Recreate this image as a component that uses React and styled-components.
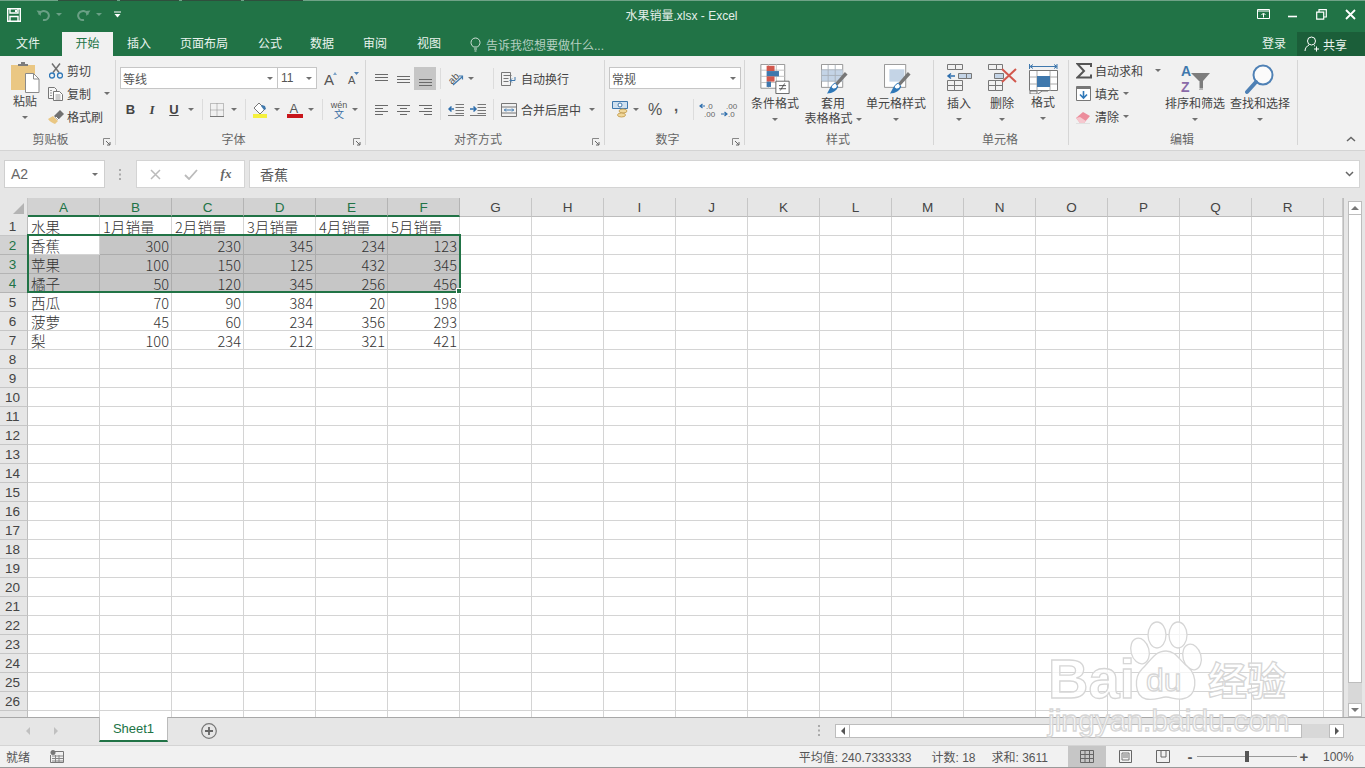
import styled, { createGlobalStyle } from 'styled-components';

const GlobalStyle = createGlobalStyle`
  html, body {
    margin: 0;
    padding: 0;
    background: #f1f1f1;
  }
  * {
    box-sizing: border-box;
  }
  svg {
    flex: none;
  }
`;

const FONT = `"Liberation Sans", "Noto Sans CJK SC", sans-serif`;
const GREEN = '#217346';
const COLS = 'ABCDEFGHIJKLMNOPQR'.split('');

const DATA = [
  ['水果', '1月销量', '2月销量', '3月销量', '4月销量', '5月销量'],
  ['香蕉', 300, 230, 345, 234, 123],
  ['苹果', 100, 150, 125, 432, 345],
  ['橘子', 50, 120, 345, 256, 456],
  ['西瓜', 70, 90, 384, 20, 198],
  ['菠萝', 45, 60, 234, 356, 293],
  ['梨', 100, 234, 212, 321, 421],
];

const Page = styled.div`
  position: relative;
  width: 1365px;
  height: 768px;
  overflow: hidden;
  display: flex;
  flex-direction: column;
  font-family: ${FONT};
  font-size: 12px;
  color: #444;
  background: #f1f1f1;
`;

/* title bar */
const TitleBar = styled.div`
  height: 32px;
  flex: none;
  background: ${GREEN};
  border-top: 1px solid #6fa287;
  display: flex;
  align-items: center;
  padding-left: 6px;
  position: relative;
`;

const TopTicks = styled.div`
  position: absolute;
  left: 58px;
  top: -1px;
  display: flex;
  gap: 3px;
  span {
    width: 59px;
    height: 1px;
    background: #2f4f3d;
  }
`;

const TitleText = styled.div`
  position: absolute;
  left: 0;
  right: 2px;
  top: 6px;
  text-align: center;
  color: #e4efe9;
  font-size: 12px;
  line-height: 18px;
`;

const QuickBtn = styled.div`
  width: ${(p) => p.$w}px;
  margin-left: ${(p) => p.$ml || 0}px;
  display: flex;
  justify-content: center;
  align-items: center;
  height: 22px;
  margin-top: -4px;
`;

const WinButtons = styled.div`
  margin-left: auto;
  display: flex;
  margin-top: -4px;
`;

const WinBtn = styled.div`
  width: 29px;
  height: 22px;
  display: flex;
  align-items: center;
  justify-content: center;
`;

/* tabs */
const TabBar = styled.div`
  height: 24px;
  flex: none;
  background: ${GREEN};
  display: flex;
  padding-left: 4px;
`;

const Tab = styled.div`
  width: ${(p) => p.$w}px;
  margin-right: ${(p) => p.$mr || 0}px;
  text-align: center;
  line-height: 24px;
  color: ${(p) => (p.$active ? GREEN : '#eaf3ee')};
  background: ${(p) => (p.$active ? '#f1f1f1' : 'transparent')};
`;

const TellMe = styled.div`
  margin-left: 15px;
  display: flex;
  align-items: center;
  gap: 5px;
  color: #b5d0c1;
`;

const SignIn = styled.div`
  margin-left: auto;
  width: 46px;
  line-height: 24px;
  text-align: center;
  color: #eaf3ee;
`;

const Share = styled.div`
  width: 68px;
  background: #1b5e39;
  color: #eaf3ee;
  display: flex;
  align-items: center;
  padding-left: 7px;
  gap: 3px;
`;

/* ribbon */
const Ribbon = styled.div`
  height: 94px;
  flex: none;
  display: flex;
  background: #f1f1f1;
`;

const Group = styled.div`
  width: ${(p) => p.$w}px;
  flex: none;
  height: 85px;
  margin-top: 4px;
  display: flex;
  flex-direction: column;
  border-right: 1px solid #d6d6d6;
`;

const GroupBody = styled.div`
  flex: 1;
  min-height: 0;
  display: flex;
`;

const GroupFoot = styled.div`
  height: 18px;
  flex: none;
  display: grid;
  grid-template-columns: 1fr auto 1fr;
  align-items: center;
  color: #666;
  padding-right: ${(p) => (p.$launcher ? 14 : 2)}px;
  margin-bottom: -4px;
`;

const FootLabel = styled.div`
  grid-column: 2;
  line-height: 18px;
`;

const Launcher = styled.div`
  grid-column: 3;
  justify-self: end;
  display: flex;
  margin-right: -10px;
  margin-top: 3px;
`;

const Rows = styled.div`
  display: flex;
  flex-direction: column;
  gap: 8px;
  padding: 7px 0 0 4px;
`;

const Row = styled.div`
  display: flex;
  height: 23px;
  align-items: center;
`;

const Btn = styled.div`
  width: ${(p) => p.$w || 22}px;
  margin-left: ${(p) => p.$ml || 0}px;
  height: 23px;
  flex: none;
  display: flex;
  align-items: center;
  justify-content: center;
  background: ${(p) => (p.$active ? '#c6c6c6' : 'transparent')};
`;

const Sep = styled.div`
  width: 1px;
  height: 21px;
  flex: none;
  background: #dcdcdc;
  margin-left: ${(p) => p.$l}px;
  margin-right: ${(p) => p.$r}px;
`;

const Caret = styled.span`
  display: inline-block;
  width: 0;
  height: 0;
  flex: none;
  border-left: 3px solid transparent;
  border-right: 3px solid transparent;
  border-top: 3px solid #707070;
`;

const CaretBtn = styled.div`
  width: ${(p) => p.$w || 10}px;
  height: 23px;
  flex: none;
  display: flex;
  align-items: center;
  justify-content: center;
`;

const SelectBox = styled.div`
  width: ${(p) => p.$w}px;
  height: 22px;
  margin-top: -1px;
  flex: none;
  background: #fff;
  border: 1px solid #c6c6c6;
  margin-left: ${(p) => (p.$joined ? -1 : 0)}px;
  display: flex;
  align-items: center;
  justify-content: space-between;
  padding: 0 4px 0 ${(p) => (p.$joined ? 3 : 2)}px;
  color: #555;
`;

const BigBtn = styled.div`
  width: ${(p) => p.$w}px;
  flex: none;
  display: flex;
  flex-direction: column;
  align-items: center;
  padding-top: 4px;
  margin-left: ${(p) => p.$ml || 0}px;
`;

const BigIcon = styled.div`
  height: 33px;
  display: flex;
  align-items: flex-start;
  justify-content: center;
  margin-top: ${(p) => p.$mt || 0}px;
  padding-bottom: ${(p) => -(p.$mt || 0)}px;
`;

const BigLabel = styled.div`
  line-height: 15px;
  height: 15px;
  white-space: nowrap;
  display: flex;
  align-items: center;
  justify-content: center;
  gap: 3px;
`;

const SmallCol = styled.div`
  width: ${(p) => p.$w}px;
  flex: none;
  margin-left: ${(p) => p.$ml || 0}px;
  margin-top: -1px;
  display: flex;
  flex-direction: column;
`;

const SmallBtn = styled.div`
  height: 23px;
  display: flex;
  align-items: center;
  gap: ${(p) => p.$gap ?? 3}px;
  white-space: nowrap;
  padding-left: ${(p) => p.$pl || 0}px;
`;

const TextBtn = styled.div`
  display: flex;
  align-items: center;
  white-space: nowrap;
  height: 23px;
  margin-left: 4px;
`;

const BoldGlyph = styled.span`
  font-family: ${(p) => (p.$italic ? '"Liberation Serif", serif' : '"Liberation Sans", sans-serif')};
  font-weight: 700;
  font-size: 13px;
  color: #444;
  font-style: ${(p) => (p.$italic ? 'italic' : 'normal')};
  text-decoration: ${(p) => (p.$underline ? 'underline' : 'none')};
`;

const WenGlyph = styled.div`
  display: flex;
  flex-direction: column;
  align-items: center;
  line-height: 9px;
  font-size: 9px;
  color: #555;
  span + span {
    color: #3a6fa5;
    font-size: 10px;
  }
`;

const PercentGlyph = styled.span`
  font-size: 16px;
  color: #555;
`;

const CommaGlyph = styled.span`
  font-size: 15px;
  font-weight: 700;
  color: #555;
  margin-top: -9px;
`;

const Collapse = styled.div`
  margin-left: auto;
  align-self: flex-end;
  padding: 0 9px 8px 0;
  display: flex;
`;

/* formula bar */
const FormulaBar = styled.div`
  height: 48px;
  flex: none;
  background: #e6e6e6;
  border-top: 1px solid #d4d4d4;
  display: flex;
  align-items: flex-start;
  padding: 9px 5px 0 4px;
`;

const NameBox = styled.div`
  width: 101px;
  height: 28px;
  background: #fff;
  border: 1px solid #cfcfcf;
  display: flex;
  align-items: center;
  justify-content: space-between;
  padding: 0 6px;
  font-size: 14px;
  color: #666;
`;

const Dots = styled.div`
  width: 31px;
  height: 28px;
  display: flex;
  align-items: center;
  justify-content: center;
`;

const FormulaTools = styled.div`
  width: 109px;
  height: 28px;
  background: #fff;
  border: 1px solid #d4d4d4;
  display: flex;
  align-items: center;
  justify-content: space-around;
  padding: 0 1px;
`;

const FxGlyph = styled.span`
  font-family: "Liberation Serif", serif;
  font-style: italic;
  font-weight: 700;
  font-size: 13px;
  color: #666;
`;

const FormulaInput = styled.div`
  flex: 1;
  height: 28px;
  margin-left: 4px;
  background: #fff;
  border: 1px solid #d4d4d4;
  display: flex;
  align-items: center;
  justify-content: space-between;
  padding: 0 5px 0 10px;
  font-size: 14px;
  color: #555;
`;

/* sheet */
const SheetArea = styled.div`
  height: 519px;
  flex: none;
  display: flex;
  background: #e6e6e6;
`;

const Sheet = styled.div`
  position: relative;
  width: 1344px;
  flex: none;
  overflow: hidden;
  background: #fff;
  border-right: 1px solid #bdbdbd;
`;

const SheetGrid = styled.div`
  display: grid;
  grid-template-columns: 28px repeat(18, 72px) 1fr;
  grid-auto-rows: 19px;
`;

const Corner = styled.div`
  background: #e6e6e6;
  border-right: 1px solid #c6c6c6;
  display: flex;
  align-items: flex-end;
  justify-content: flex-end;
  padding: 0 3px 3px 0;
`;

const ColHead = styled.div`
  background: ${(p) => (p.$on ? '#d2d2d2' : '#e6e6e6')};
  border-right: 1px solid ${(p) => (p.$on ? '#b4b4b4' : '#c6c6c6')};
  border-bottom: ${(p) => (p.$on ? `2px solid ${GREEN}` : '1px solid #bdbdbd')};
  color: ${(p) => (p.$on ? GREEN : '#444')};
  text-align: center;
  font-size: 13.5px;
  line-height: 19px;
`;

const RowHead = styled.div`
  background: ${(p) => (p.$on ? '#d2d2d2' : '#e6e6e6')};
  border-right: 1px solid ${(p) => (p.$on ? GREEN : '#bdbdbd')};
  border-bottom: 1px solid ${(p) => (p.$on ? '#b4b4b4' : '#c6c6c6')};
  color: ${(p) => (p.$on ? GREEN : '#444')};
  text-align: center;
  font-size: 13.5px;
  line-height: 19px;
  padding-right: 2px;
`;

const Cell = styled.div`
  background: ${(p) => (p.$sel ? '#c6c6c6' : '#fff')};
  border-right: 1px solid ${(p) => (p.$sel ? '#acacac' : '#d4d4d4')};
  border-bottom: 1px solid ${(p) => (p.$sel ? '#acacac' : '#d4d4d4')};
  padding: 0 2px 0 3px;
  text-align: ${(p) => (p.$num ? 'right' : 'left')};
  font-family: "Noto Sans CJK SC", "Liberation Sans", sans-serif;
  font-weight: 300;
  font-size: 14.6px;
  line-height: 20px;
  color: #333;
  overflow: hidden;
  white-space: nowrap;
`;

const SelectionBox = styled.div`
  position: absolute;
  left: 27px;
  top: 36px;
  width: 434px;
  height: 59px;
  border: 2px solid ${GREEN};
  pointer-events: none;
`;

const FillHandle = styled.div`
  position: absolute;
  right: -3px;
  bottom: -3px;
  width: 6px;
  height: 6px;
  background: ${GREEN};
  border: 1px solid #fff;
`;

const VScroll = styled.div`
  width: 21px;
  flex: none;
  padding: 3px 3px 0 4px;
  display: flex;
  flex-direction: column;
`;

const ScrollBtn = styled.div`
  height: 14px;
  width: ${(p) => p.$w || 'auto'};
  flex: none;
  background: #fff;
  border: 1px solid #bdbdbd;
  display: flex;
  align-items: center;
  justify-content: center;
`;

const VThumb = styled.div`
  height: 468px;
  flex: none;
  background: #fff;
  border: 1px solid #bdbdbd;
  border-top: none;
`;

const VTrack = styled.div`
  flex: 1;
  background: #d8d8d8;
`;

const ArrowUp = styled.span`
  border-left: 4px solid transparent;
  border-right: 4px solid transparent;
  border-bottom: 4px solid #777;
`;

const ArrowDown = styled.span`
  border-left: 4px solid transparent;
  border-right: 4px solid transparent;
  border-top: 4px solid #777;
`;

const ArrowLeft = styled.span`
  border-top: 4px solid transparent;
  border-bottom: 4px solid transparent;
  border-right: 4px solid ${(p) => p.$c || '#555'};
`;

const ArrowRight = styled.span`
  border-top: 4px solid transparent;
  border-bottom: 4px solid transparent;
  border-left: 4px solid ${(p) => p.$c || '#555'};
`;

/* sheet tabs */
const SheetTabs = styled.div`
  height: 28px;
  flex: none;
  background: #e6e6e6;
  border-top: 1px solid #a8a8a8;
  display: flex;
  align-items: flex-start;
`;

const TabNav = styled.div`
  width: 99px;
  height: 26px;
  display: flex;
  align-items: center;
  gap: 24px;
  padding-left: 26px;
`;

const SheetTab = styled.div`
  width: 69px;
  height: 25px;
  margin-top: -1px;
  background: #fff;
  border-left: 1px solid #bbb;
  border-right: 1px solid #bbb;
  border-bottom: 2px solid ${GREEN};
  color: ${GREEN};
  font-size: 13px;
  text-align: center;
  line-height: 24px;
`;

const AddSheet = styled.div`
  margin-left: 33px;
  height: 26px;
  display: flex;
  align-items: center;
`;

const HScrollWrap = styled.div`
  margin-left: auto;
  width: 549px;
  height: 27px;
  display: flex;
  align-items: center;
  padding: 0 21px 2px 0;
`;

const HDots = styled.div`
  width: 3px;
  display: flex;
  margin-left: 2px;
  margin-right: 14px;
`;

const HThumb = styled.div`
  width: 452px;
  height: 14px;
  background: #fff;
  border-top: 1px solid #bdbdbd;
  border-bottom: 1px solid #bdbdbd;
  border-right: 1px solid #bdbdbd;
`;

const HTrack = styled.div`
  flex: 1;
  height: 14px;
  background: #d8d8d8;
`;

/* status bar */
const StatusBar = styled.div`
  height: 23px;
  flex: none;
  background: #f1f1f1;
  border-top: 1px solid #d4d4d4;
  border-bottom: 1px solid #9a9a9a;
  display: flex;
  align-items: center;
  padding-left: 6px;
  color: #555;
`;

const StatusIcon = styled.div`
  margin-left: 20px;
  display: flex;
`;

const StatusStats = styled.div`
  margin-left: auto;
  display: flex;
  margin-right: 20px;
  span + span {
    margin-left: 20px;
  }
  span:last-child {
    margin-left: 16px;
  }
`;

const ViewBtn = styled.div`
  width: 38px;
  height: 21px;
  display: flex;
  align-items: center;
  justify-content: center;
  background: ${(p) => (p.$active ? '#c6c6c6' : 'transparent')};
`;

const Zoom = styled.div`
  display: flex;
  align-items: center;
  margin-left: 1px;
`;

const ZoomSign = styled.span`
  width: 14px;
  text-align: center;
  font-size: 15px;
  font-weight: 700;
  color: #555;
  line-height: 15px;
`;

const ZoomTrack = styled.div`
  position: relative;
  width: 100px;
  height: 1px;
  background: #999;
`;

const ZoomThumb = styled.div`
  position: absolute;
  left: 48px;
  top: -5px;
  width: 4px;
  height: 11px;
  background: #555;
`;

const ZoomValue = styled.div`
  width: 54px;
  padding-left: 12px;
`;

const WatermarkSvg = styled.svg`
  position: absolute;
  left: 1040px;
  top: 615px;
  pointer-events: none;
  overflow: visible;
`;

/* icons */
const Svg = ({ w, h, vw, vh, children }) => (
  <svg width={w} height={h} viewBox={`0 0 ${vw || w} ${vh || h}`} fill="none">
    {children}
  </svg>
);

const SaveIcon = () => (
  <Svg w={14} h={14}>
    <path d="M.7.7h12.6v12.6H.7z" stroke="#fff" strokeWidth="1.4" />
    <path d="M3 1v4h8V1M3 13V8.500h8V13" stroke="#fff" strokeWidth="1.4" />
    <path d="M8 2h2v2H8z" fill="#fff" />
  </Svg>
);

const UndoIcon = ({ flip }) => (
  <Svg w={15} h={13}>
    <g transform={flip ? 'translate(15 0) scale(-1 1)' : undefined}>
      <path d="M3 6.500a5 4.500 0 1 1 4 5.500" stroke="#6aa085" strokeWidth="2" />
      <path d="M.5 2.500l5 .5-1 5z" fill="#6aa085" />
    </g>
  </Svg>
);

const QuickDown = () => (
  <Svg w={7} h={7}>
    <path d="M0 1h7" stroke="#fff" />
    <path d="M.5 3h6L3.500 6.500z" fill="#fff" />
  </Svg>
);

const FadeCaret = () => (
  <Svg w={6} h={4}>
    <path d="M0 0h6L3 3z" fill="#6aa085" />
  </Svg>
);

const RibbonOptIcon = () => (
  <Svg w={13} h={11}>
    <path d="M.5.5h12v9H.5z" stroke="#fff" />
    <path d="M1 2h11" stroke="#fff" />
    <path d="M6.500 8.500v-4M4.500 6l2-2 2 2" stroke="#fff" />
  </Svg>
);

const MinIcon = () => (
  <Svg w={10} h={10}>
    <path d="M0 6.500h9" stroke="#fff" strokeWidth="1.6" />
  </Svg>
);

const RestoreIcon = () => (
  <Svg w={11} h={11}>
    <path d="M.7 3.200h7v7h-7z" stroke="#fff" strokeWidth="1.2" />
    <path d="M3 3V.7h7.300V8H8" stroke="#fff" strokeWidth="1.2" />
  </Svg>
);

const CloseIcon = () => (
  <Svg w={11} h={11}>
    <path d="M1 1l9 9M10 1l-9 9" stroke="#fff" strokeWidth="1.8" />
  </Svg>
);

const BulbIcon = () => (
  <Svg w={11} h={15}>
    <path d="M3.500 10C2 8.500 1 7.500 1 5.500a4.500 4.500 0 0 1 9 0c0 2-1 3-2.500 4.500z" stroke="#d3e2da" />
    <path d="M4 12h3M4.500 14h2" stroke="#d3e2da" />
  </Svg>
);

const PersonIcon = () => (
  <Svg w={16} h={16}>
    <circle cx="7.500" cy="5" r="4" stroke="#fff" />
    <path d="M1 15c0-3 2-5 4-6M10 9.500l1 .7" stroke="#fff" />
    <path d="M12.500 10.500v5M10 13h5" stroke="#fff" />
  </Svg>
);

const PasteIcon = () => (
  <Svg w={29} h={31}>
    <rect x="0" y="3" width="24" height="25" fill="#eac783" />
    <path d="M7 4V2h3V0h4v2h3v2z" fill="#7d7d7d" />
    <path d="M14.500 11.500h8l5.500 5.500v13.500H14.500z" fill="#fff" stroke="#8a8a8a" />
    <path d="M22.500 11.500V17h5.500" stroke="#8a8a8a" />
  </Svg>
);

const ScissorsIcon = () => (
  <Svg w={14} h={16}>
    <path d="M4 9.500L11 .5M10 9.500L3 .5" stroke="#707070" strokeWidth="1.500" />
    <circle cx="3" cy="12.500" r="2.500" stroke="#2f78b8" strokeWidth="1.300" />
    <circle cx="11" cy="12.500" r="2.500" stroke="#2f78b8" strokeWidth="1.300" />
  </Svg>
);

const CopyIcon = () => (
  <Svg w={15} h={14}>
    <path d="M.5.5h6l2 2v9H.5z" fill="#f6f6f6" stroke="#777" />
    <path d="M5.500 4.500h6l3 3v6h-9z" fill="#fff" stroke="#777" />
    <path d="M7.500 8h5M7.500 10h5M7.500 12h5M2 3.500h2M2 6h2M2 8.500h2" stroke="#999" />
  </Svg>
);

const BrushIcon = () => (
  <Svg w={16} h={14}>
    <path d="M0 9l5-3 5 5-3 3c-2-1-5-2-7-5z" fill="#eac783" />
    <path d="M6 6l6-6 4 4-6 6z" fill="#707070" />
    <path d="M8 7l3 3" stroke="#fff" />
  </Svg>
);

const GrowFontIcon = () => (
  <Svg w={20} h={17}>
    <text x="3" y="15" fontFamily="Liberation Sans" fontSize="15" fill="#555">A</text>
    <path d="M12 5l2-3 2 3z" fill="#7da4c9" />
  </Svg>
);

const ShrinkFontIcon = () => (
  <Svg w={20} h={17}>
    <text x="6" y="14" fontFamily="Liberation Sans" fontSize="11" fill="#555">A</text>
    <path d="M12 2h5l-2.500 3z" fill="#4f81b5" />
  </Svg>
);

const BorderIcon = () => (
  <Svg w={14} h={14}>
    <path d="M.5.5h13v13H.5zM7 .5v13M.5 7h13" stroke="#8a8a8a" strokeDasharray="1 1" />
    <path d="M0 13.500h14" stroke="#777" />
  </Svg>
);

const FillIcon = () => (
  <Svg w={18} h={16}>
    <path d="M8 1l6 6-5 5-6-6z" fill="#fff" stroke="#777" />
    <path d="M11 3l3 1 1 3-2 1-3-4z" fill="#3f78ad" />
    <path d="M2 12h14v4H2z" fill="#f5f03c" />
  </Svg>
);

const ColorAIcon = () => (
  <Svg w={16} h={16}>
    <text x="2.500" y="11" fontFamily="Liberation Sans" fontSize="13" fill="#555">A</text>
    <path d="M0 12h16v4H0z" fill="#c8151b" />
  </Svg>
);

const Lines = ({ rows }) => (
  <Svg w={15} h={14}>
    {rows.map(([y, x1, x2], i) => (
      <path key={i} d={`M${x1} ${y}.5H${x2}`} stroke="#6a6a6a" />
    ))}
  </Svg>
);

const OrientIcon = () => (
  <Svg w={18} h={18}>
    <text x="1" y="13" transform="rotate(-45 5 9)" fontFamily="Liberation Sans" fontSize="10" fill="#555">ab</text>
    <path d="M6 15l9-8M12 6h3.500v3.500" stroke="#3f78ad" strokeWidth="1.200" />
  </Svg>
);

const WrapIcon = () => (
  <Svg w={16} h={14}>
    <path d="M.5.500h9v13h-9z" stroke="#777" />
    <path d="M2.500 3.500h8M2.500 6.500h5M2.500 9.500h5" stroke="#777" />
    <path d="M14 5v3.500h-5M11 6.500l-2 2 2 2" stroke="#3f78ad" />
  </Svg>
);

const MergeIcon = () => (
  <Svg w={16} h={14}>
    <path d="M.5.500h15v13H.5zM.5 4h15M.5 10h15" stroke="#777" />
    <path d="M3 7h10M5 5.500L3.500 7 5 8.500M11 5.500L12.500 7 11 8.500" stroke="#3f78ad" />
  </Svg>
);

const IndentIcon = ({ right }) => (
  <Svg w={16} h={13}>
    <path d="M7.500 1.500H16M7.500 4.500H16M7.500 7.500H16M7.500 10.500H16M0 12.500h16" stroke="#777" />
    <path
      d={right ? 'M0 6h5M3.500 3.500L6 6 3.500 8.500' : 'M6 6H1M3.500 3.500L1 6l2.500 2.500'}
      stroke="#2f6fad"
      strokeWidth="1.500"
    />
  </Svg>
);

const CurrencyIcon = () => (
  <Svg w={17} h={17}>
    <path d="M.500.500h15v7H.500z" fill="#cfe0ef" stroke="#3f78ad" />
    <circle cx="8" cy="4" r="2" fill="#fff" stroke="#3f78ad" />
    <ellipse cx="11" cy="10" rx="4" ry="2" fill="#f0d79a" stroke="#c9a55c" />
    <ellipse cx="9.500" cy="14" rx="4" ry="2" fill="#f0d79a" stroke="#c9a55c" />
  </Svg>
);

const DecIcon = ({ more }) => (
  <Svg w={20} h={16}>
    <text x={more ? 7 : 9} y="7" fontFamily="Liberation Sans" fontSize="8" fill="#666">{more ? '.00' : '.0'}</text>
    <text x={more ? 9 : 7} y="15" fontFamily="Liberation Sans" fontSize="8" fill="#666">{more ? '.0' : '.00'}</text>
    <path
      d={more ? 'M2 12h5M5.500 10L8 12l-2.500 2' : 'M8 4H3M5.500 2L3 4l2.500 2'}
      stroke="#2f6fad"
      strokeWidth="1.200"
    />
  </Svg>
);

const CondIcon = () => (
  <Svg w={30} h={30} vw={33} vh={34}>
    <path d="M.500.500h27v27H.500z" fill="#fff" stroke="#8a8a8a" />
    <path d="M9 0v28M18 0v28M0 7h28M0 14h28M0 21h28" stroke="#bdbdbd" />
    <path d="M7 2h9v6H7z" fill="#d2584d" />
    <path d="M7 8h14v6H7z" fill="#3f78ad" />
    <path d="M7 14h9v6H7z" fill="#d2584d" />
    <path d="M7 20h5v6H7z" fill="#3f78ad" />
    <path d="M17.500 19.500h15v14h-15z" fill="#fff" stroke="#555" />
    <path d="M21 24.500h8M21 28h8M27.500 22l-5 8" stroke="#444" />
  </Svg>
);

const TableStyleIcon = ({ cell }) => (
  <Svg w={30} h={30} vw={33} vh={34}>
    <path d="M3.500.500h24v26h-24z" fill="#fff" stroke="#8a8a8a" />
    {cell ? (
      <path d="M9 6h17v14H9z" fill="#c4d4e6" />
    ) : (
      <>
        <path d="M3.500 6.500h24v13h-24z" fill="#c4d4e6" />
        <path d="M11 1v25M19 1v25M4 6.500h23M4 13h23M4 19.500h23" stroke="#a8b0b8" />
      </>
    )}
    <path d="M18 23L30 9l3 3-12 13z" fill="#777" />
    <path d="M19 21l3.500 4.500c-2 5-6 7.500-13 8 3-3 3-9 9.500-12.500z" fill="#2f78b8" />
    <path d="M15 26c1 2 3 2 5 1l1-2-2-3c-2 1-3 2-4 4z" fill="#fff" />
  </Svg>
);

const InsertIcon = () => (
  <Svg w={27} h={28}>
    <path d="M1.500.500h8v5h-8zM9.500.500h7v5h-7zM1.500 16.500h7v5h-7zM1.500 21.500h7v5h-7zM8.500 16.500h8v5h-8zM8.500 21.500h8v5h-8z" stroke="#777" />
    <path d="M12.500 9.500h8v5h-8zM20.500 9.500h5v5h-5z" fill="#c4d4e6" stroke="#777" />
    <path d="M2 12h7M5 9.500L2 12l3 2.500" stroke="#2f6fad" strokeWidth="1.500" />
  </Svg>
);

const DeleteIcon = () => (
  <Svg w={30} h={28}>
    <path d="M1.500.500h8v5h-8zM9.500.500h6v5h-6zM1.500 16.500h7v5h-7zM1.500 21.500h7v5h-7zM8.500 16.500h7v5h-7zM8.500 21.500h7v5h-7z" stroke="#777" />
    <path d="M7.500 9.500h9v5h-9z" fill="#c4d4e6" stroke="#777" />
    <path d="M15 5l14 13M29 5L15 18" stroke="#d2584d" strokeWidth="2" />
  </Svg>
);

const FormatIcon = () => (
  <Svg w={29} h={31}>
    <path d="M.500 1v5M28 1v5M1 3.500h27M4 1.500L1 3.500l3 2M25 1.500l3 2-3 2" stroke="#3f78ad" />
    <path d="M.500 7.500h28v20h-28z" fill="#fff" stroke="#777" />
    <path d="M8 8v20M21 8v20M1 14h27M1 21h27" stroke="#aaa" />
    <path d="M8 13h13v11H8z" fill="#3f78ad" />
    <path d="M1 28h7v3H1zM9 31l4-3h6" stroke="#777" fill="none" />
  </Svg>
);

const SigmaIcon = () => (
  <Svg w={16} h={16}>
    <path d="M15 4V1H1.500l6.500 7-6.500 6.500H15v-3" stroke="#555" strokeWidth="2" />
  </Svg>
);

const FillDownIcon = () => (
  <Svg w={15} h={15}>
    <path d="M.500.500h14v14H.500z" fill="#fff" stroke="#777" />
    <path d="M1 1h13v2H1z" fill="#777" />
    <path d="M7.500 5v7M4 8.500l3.500 3.500L11 8.500" stroke="#2f78b8" strokeWidth="1.600" />
  </Svg>
);

const EraserIcon = () => (
  <Svg w={15} h={14}>
    <path d="M0 8l7-6 7 4-6 7H4z" fill="#ec8d9c" />
    <path d="M0 8l4 5h4l2-2-6-4z" fill="#f5c8cf" />
    <path d="M0 13.500h14" stroke="#e0e0e0" />
  </Svg>
);

const SortFilterIcon = () => (
  <Svg w={32} h={31}>
    <text x="2" y="12" fontFamily="Liberation Sans" fontWeight="700" fontSize="14" fill="#3f78ad">A</text>
    <text x="2" y="28" fontFamily="Liberation Sans" fontWeight="700" fontSize="14" fill="#8a6aa8">Z</text>
    <path d="M12 9h19l-7 8v9h-4v-9z" fill="#7d7d7d" />
    <path d="M20 17v8h4" stroke="#f1f1f1" />
  </Svg>
);

const FindIcon = () => (
  <Svg w={30} h={31}>
    <circle cx="18" cy="11" r="9.500" stroke="#4f81b5" strokeWidth="2" fill="#fbfbfb" />
    <path d="M11 18L2 28" stroke="#4f81b5" strokeWidth="4" strokeLinecap="round" />
  </Svg>
);

const LauncherIcon = () => (
  <Svg w={8} h={8}>
    <path d="M.500 7V.500H7" stroke="#888" />
    <path d="M3 3l4 4M7 4v3H4" stroke="#666" />
  </Svg>
);

const ChevronUp = () => (
  <Svg w={10} h={6}>
    <path d="M1 5l4-3.500L9 5" stroke="#666" strokeWidth="1.500" />
  </Svg>
);

const ChevronDown = () => (
  <Svg w={9} h={6}>
    <path d="M1 1l3.500 3.500L8 1" stroke="#666" strokeWidth="1.500" />
  </Svg>
);

const VDots = () => (
  <Svg w={3} h={11}>
    <path d="M0 0h2v2H0zM0 4.500h2v2H0zM0 9h2v2H0z" fill="#aaa" />
  </Svg>
);

const CrossIcon = () => (
  <Svg w={11} h={11}>
    <path d="M1 1l9 9M10 1l-9 9" stroke="#bbb" strokeWidth="1.500" />
  </Svg>
);

const CheckIcon = () => (
  <Svg w={14} h={11}>
    <path d="M1 6l4 4 8-9" stroke="#bbb" strokeWidth="1.800" />
  </Svg>
);

const CornerIcon = () => (
  <Svg w={11} h={11}>
    <path d="M11 0v11H0z" fill="#b4b4b4" />
  </Svg>
);

const AddIcon = () => (
  <Svg w={16} h={16}>
    <circle cx="8" cy="8" r="7.300" stroke="#777" strokeWidth="1.200" />
    <path d="M8 4v8M4 8h8" stroke="#666" strokeWidth="1.800" />
  </Svg>
);

const ReadyIcon = () => (
  <Svg w={14} h={13}>
    <circle cx="3" cy="2.500" r="2.500" fill="#777" />
    <path d="M5 1.500h8.500v11H.500V5" stroke="#777" />
    <path d="M2 6h11M2 8.500h11M2 11h11M5.500 5v7M9 5v7" stroke="#888" />
  </Svg>
);

const NormalViewIcon = () => (
  <Svg w={14} h={13}>
    <path d="M.500.500h13v12H.500zM5 .500v12M9.500.500v12M.500 4.500h13M.500 8.500h13" stroke="#666" />
  </Svg>
);

const PageViewIcon = () => (
  <Svg w={13} h={13}>
    <path d="M.500.500h12v12H.500z" stroke="#666" />
    <path d="M3 3h7v7H3zM4 5h5M4 7h5" stroke="#777" />
  </Svg>
);

const BreakViewIcon = () => (
  <Svg w={14} h={13}>
    <path d="M.500.500h13v12H.500z" stroke="#666" />
    <path d="M5 1v6h5V1" stroke="#666" />
  </Svg>
);

const Watermark = () => (
  <WatermarkSvg width={270} height={130} viewBox="0 0 270 130" fill="none">
    <g stroke="#d6d6d6" strokeWidth="1.300" fill="rgba(255,255,255,0.75)">
      <ellipse cx="117" cy="20" rx="9" ry="13" />
      <ellipse cx="138" cy="20" rx="9" ry="13" />
      <ellipse cx="100" cy="36" rx="9" ry="13" transform="rotate(-15 100 36)" />
      <ellipse cx="152" cy="42" rx="9" ry="13" transform="rotate(-15 152 42)" />
      <path d="M126 36c10 0 14 10 22 16 10 8 10 30-6 32-6 1-11-2-16-2s-12 4-20 2c-12-3-12-22-4-30 8-7 12-18 24-18z" />
      <text x="8" y="83" fontFamily="Liberation Sans" fontWeight="700" fontSize="56">Bai</text>
      <text x="106" y="76" fontFamily="Liberation Sans" fontSize="32">du</text>
      <text x="168" y="80" fontFamily="Noto Sans CJK SC" fontWeight="700" fontSize="39">经验</text>
      <text x="8" y="116" fontFamily="Liberation Sans" fontSize="30">jingyan.baidu.com</text>
    </g>
  </WatermarkSvg>
);

const ALIGN_TOP = [[2, 1, 14], [5, 1, 14], [8, 1, 14]];
const ALIGN_MID = [[4, 1, 14], [7, 1, 14], [10, 1, 14]];
const ALIGN_BOT = [[7, 1, 14], [10, 1, 14], [13, 1, 14]];
const ALIGN_L = [[2, 1, 14], [5, 1, 9], [8, 1, 14], [11, 1, 9]];
const ALIGN_C = [[2, 1, 14], [5, 4, 11], [8, 1, 14], [11, 4, 11]];
const ALIGN_R = [[2, 1, 14], [5, 6, 14], [8, 1, 14], [11, 6, 14]];

function GroupFooter({ label, launcher }) {
  return (
    <GroupFoot $launcher={launcher}>
      <FootLabel>{label}</FootLabel>
      {launcher && (
        <Launcher>
          <LauncherIcon />
        </Launcher>
      )}
    </GroupFoot>
  );
}

function Big({ w, ml, mt, icon, lines, tailCaret }) {
  return (
    <BigBtn $w={w} $ml={ml}>
      <BigIcon $mt={mt}>{icon}</BigIcon>
      {lines.map((line, i) => (
        <BigLabel key={line}>
          {line}
          {tailCaret && i === lines.length - 1 && <Caret />}
        </BigLabel>
      ))}
      {!tailCaret && (
        <BigLabel>
          <Caret />
        </BigLabel>
      )}
    </BigBtn>
  );
}

function RibbonBar() {
  return (
    <Ribbon>
      <Group $w={116}>
        <GroupBody>
          <Big w={30} ml={10} mt={-2} icon={<PasteIcon />} lines={['粘贴']} />
          <SmallCol $w={70} $ml={8}>
            <SmallBtn $gap={4} $pl={1}>
              <ScissorsIcon />
              剪切
            </SmallBtn>
            <SmallBtn $gap={4}>
              <CopyIcon />
              复制
              <CaretBtn $w={24}>
                <Caret />
              </CaretBtn>
            </SmallBtn>
            <SmallBtn $gap={3}>
              <BrushIcon />
              格式刷
            </SmallBtn>
          </SmallCol>
        </GroupBody>
        <GroupFooter label="剪贴板" launcher />
      </Group>

      <Group $w={250}>
        <GroupBody>
          <Rows>
            <Row>
              <SelectBox $w={158}>
                等线
                <Caret />
              </SelectBox>
              <SelectBox $w={40} $joined>
                11
                <Caret />
              </SelectBox>
              <Btn $w={20} $ml={4}>
                <GrowFontIcon />
              </Btn>
              <Btn $w={20} $ml={1}>
                <ShrinkFontIcon />
              </Btn>
            </Row>
            <Row>
              <Btn $w={21}>
                <BoldGlyph>B</BoldGlyph>
              </Btn>
              <Btn $w={22}>
                <BoldGlyph $italic>I</BoldGlyph>
              </Btn>
              <Btn $w={22}>
                <BoldGlyph $underline>U</BoldGlyph>
              </Btn>
              <CaretBtn $w={12}>
                <Caret />
              </CaretBtn>
              <Sep $l={5} $r={2} />
              <Btn $w={24}>
                <BorderIcon />
              </Btn>
              <CaretBtn $w={10}>
                <Caret />
              </CaretBtn>
              <Sep $l={6} $r={3} />
              <Btn $w={22}>
                <FillIcon />
              </Btn>
              <CaretBtn $w={12}>
                <Caret />
              </CaretBtn>
              <Btn $w={24}>
                <ColorAIcon />
              </Btn>
              <CaretBtn $w={8}>
                <Caret />
              </CaretBtn>
              <Sep $l={7} $r={4} />
              <Btn $w={24}>
                <WenGlyph>
                  <span>wén</span>
                  <span>文</span>
                </WenGlyph>
              </Btn>
              <CaretBtn $w={8}>
                <Caret />
              </CaretBtn>
            </Row>
          </Rows>
        </GroupBody>
        <GroupFooter label="字体" launcher />
      </Group>

      <Group $w={239}>
        <GroupBody>
          <Rows>
            <Row>
              <Btn>
                <Lines rows={ALIGN_TOP} />
              </Btn>
              <Btn>
                <Lines rows={ALIGN_MID} />
              </Btn>
              <Btn $active>
                <Lines rows={ALIGN_BOT} />
              </Btn>
              <Sep $l={4} $r={5} />
              <Btn $w={20}>
                <OrientIcon />
              </Btn>
              <CaretBtn $w={10}>
                <Caret />
              </CaretBtn>
              <Sep $l={17} $r={7} />
              <Btn $w={16}>
                <WrapIcon />
              </Btn>
              <TextBtn>自动换行</TextBtn>
            </Row>
            <Row>
              <Btn>
                <Lines rows={ALIGN_L} />
              </Btn>
              <Btn>
                <Lines rows={ALIGN_C} />
              </Btn>
              <Btn>
                <Lines rows={ALIGN_R} />
              </Btn>
              <Sep $l={4} $r={4} />
              <Btn>
                <IndentIcon />
              </Btn>
              <Btn>
                <IndentIcon right />
              </Btn>
              <Sep $l={4} $r={7} />
              <Btn $w={16}>
                <MergeIcon />
              </Btn>
              <TextBtn>合并后居中</TextBtn>
              <CaretBtn $w={22}>
                <Caret />
              </CaretBtn>
            </Row>
          </Rows>
        </GroupBody>
        <GroupFooter label="对齐方式" launcher />
      </Group>

      <Group $w={140}>
        <GroupBody>
          <Rows>
            <Row>
              <SelectBox $w={132}>
                常规
                <Caret />
              </SelectBox>
            </Row>
            <Row>
              <Btn>
                <CurrencyIcon />
              </Btn>
              <CaretBtn $w={10}>
                <Caret />
              </CaretBtn>
              <Btn $ml={3}>
                <PercentGlyph>%</PercentGlyph>
              </Btn>
              <Btn $w={20}>
                <CommaGlyph>,</CommaGlyph>
              </Btn>
              <Sep $l={7} $r={2} />
              <Btn>
                <DecIcon />
              </Btn>
              <Btn>
                <DecIcon more />
              </Btn>
            </Row>
          </Rows>
        </GroupBody>
        <GroupFooter label="数字" launcher />
      </Group>

      <Group $w={189}>
        <GroupBody>
          <Big w={60} icon={<CondIcon />} lines={['条件格式']} />
          <Big w={56} icon={<TableStyleIcon />} lines={['套用', '表格格式']} tailCaret />
          <Big w={70} icon={<TableStyleIcon cell />} lines={['单元格样式']} />
        </GroupBody>
        <GroupFooter label="样式" />
      </Group>

      <Group $w={135}>
        <GroupBody>
          <Big w={44} ml={3} icon={<InsertIcon />} lines={['插入']} />
          <Big w={42} icon={<DeleteIcon />} lines={['删除']} />
          <Big w={40} mt={-1} icon={<FormatIcon />} lines={['格式']} />
        </GroupBody>
        <GroupFooter label="单元格" />
      </Group>

      <Group $w={229}>
        <GroupBody>
          <SmallCol $w={85} $ml={7}>
            <SmallBtn $gap={3}>
              <SigmaIcon />
              自动求和
              <CaretBtn $w={24}>
                <Caret />
              </CaretBtn>
            </SmallBtn>
            <SmallBtn $gap={4}>
              <FillDownIcon />
              填充
              <Caret />
            </SmallBtn>
            <SmallBtn $gap={4}>
              <EraserIcon />
              清除
              <Caret />
            </SmallBtn>
          </SmallCol>
          <Big w={70} ml={-1} icon={<SortFilterIcon />} lines={['排序和筛选']} />
          <Big w={60} icon={<FindIcon />} lines={['查找和选择']} />
        </GroupBody>
        <GroupFooter label="编辑" />
      </Group>

      <Collapse>
        <ChevronUp />
      </Collapse>
    </Ribbon>
  );
}

function SheetTable() {
  const isSelRow = (r) => r >= 2 && r <= 4;
  const isSelCol = (c) => c < 6;

  return (
    <SheetGrid>
      <Corner>
        <CornerIcon />
      </Corner>
      {COLS.map((c, i) => (
        <ColHead key={c} $on={isSelCol(i)}>
          {c}
        </ColHead>
      ))}
      <ColHead />
      {Array.from({ length: 26 }, (_, i) => i + 1).map((r) => {
        const row = DATA[r - 1] || [];
        return [
          <RowHead key={`h${r}`} $on={isSelRow(r)}>
            {r}
          </RowHead>,
          ...[...COLS, ''].map((c, i) => {
            const value = row[i];
            const sel = isSelRow(r) && isSelCol(i) && !(r === 2 && i === 0);
            return (
              <Cell key={`${r}-${i}`} $sel={sel} $num={typeof value === 'number'}>
                {value}
              </Cell>
            );
          }),
        ];
      })}
      <RowHead />
      {[...COLS, ''].map((c) => (
        <Cell key={`last-${c}`} />
      ))}
    </SheetGrid>
  );
}

export default function App() {
  return (
    <Page>
      <GlobalStyle />
      <TitleBar>
        <TopTicks>
          <span />
          <span />
          <span />
          <span />
        </TopTicks>
        <TitleText>水果销量.xlsx - Excel</TitleText>
        <QuickBtn $w={16}>
          <SaveIcon />
        </QuickBtn>
        <QuickBtn $w={20} $ml={11}>
          <UndoIcon />
        </QuickBtn>
        <QuickBtn $w={12}>
          <FadeCaret />
        </QuickBtn>
        <QuickBtn $w={20} $ml={8}>
          <UndoIcon flip />
        </QuickBtn>
        <QuickBtn $w={12}>
          <FadeCaret />
        </QuickBtn>
        <QuickBtn $w={12} $ml={6}>
          <QuickDown />
        </QuickBtn>
        <WinButtons>
          <WinBtn>
            <RibbonOptIcon />
          </WinBtn>
          <WinBtn>
            <MinIcon />
          </WinBtn>
          <WinBtn>
            <RestoreIcon />
          </WinBtn>
          <WinBtn>
            <CloseIcon />
          </WinBtn>
        </WinButtons>
      </TitleBar>

      <TabBar>
        <Tab $w={48} $mr={10}>文件</Tab>
        <Tab $w={51} $active>开始</Tab>
        <Tab $w={52}>插入</Tab>
        <Tab $w={78}>页面布局</Tab>
        <Tab $w={54}>公式</Tab>
        <Tab $w={50}>数据</Tab>
        <Tab $w={56}>审阅</Tab>
        <Tab $w={52}>视图</Tab>
        <TellMe>
          <BulbIcon />
          告诉我您想要做什么...
        </TellMe>
        <SignIn>登录</SignIn>
        <Share>
          <PersonIcon />
          共享
        </Share>
      </TabBar>

      <RibbonBar />

      <FormulaBar>
        <NameBox>
          A2
          <Caret />
        </NameBox>
        <Dots>
          <VDots />
        </Dots>
        <FormulaTools>
          <CrossIcon />
          <CheckIcon />
          <FxGlyph>fx</FxGlyph>
        </FormulaTools>
        <FormulaInput>
          香蕉
          <ChevronDown />
        </FormulaInput>
      </FormulaBar>

      <SheetArea>
        <Sheet>
          <SheetTable />
          <SelectionBox>
            <FillHandle />
          </SelectionBox>
        </Sheet>
        <VScroll>
          <ScrollBtn>
            <ArrowUp />
          </ScrollBtn>
          <VThumb />
          <VTrack />
          <ScrollBtn>
            <ArrowDown />
          </ScrollBtn>
        </VScroll>
      </SheetArea>

      <SheetTabs>
        <TabNav>
          <ArrowLeft $c="#c0c0c0" />
          <ArrowRight $c="#c0c0c0" />
        </TabNav>
        <SheetTab>Sheet1</SheetTab>
        <AddSheet>
          <AddIcon />
        </AddSheet>
        <HScrollWrap>
          <HDots>
            <VDots />
          </HDots>
          <ScrollBtn $w="15px">
            <ArrowLeft />
          </ScrollBtn>
          <HThumb />
          <HTrack />
          <ScrollBtn $w="15px">
            <ArrowRight />
          </ScrollBtn>
        </HScrollWrap>
      </SheetTabs>

      <StatusBar>
        就绪
        <StatusIcon>
          <ReadyIcon />
        </StatusIcon>
        <StatusStats>
          <span>平均值: 240.7333333</span>
          <span>计数: 18</span>
          <span>求和: 3611</span>
        </StatusStats>
        <ViewBtn $active>
          <NormalViewIcon />
        </ViewBtn>
        <ViewBtn>
          <PageViewIcon />
        </ViewBtn>
        <ViewBtn>
          <BreakViewIcon />
        </ViewBtn>
        <Zoom>
          <ZoomSign>-</ZoomSign>
          <ZoomTrack>
            <ZoomThumb />
          </ZoomTrack>
          <ZoomSign>+</ZoomSign>
          <ZoomValue>100%</ZoomValue>
        </Zoom>
      </StatusBar>

      <Watermark />
    </Page>
  );
}
